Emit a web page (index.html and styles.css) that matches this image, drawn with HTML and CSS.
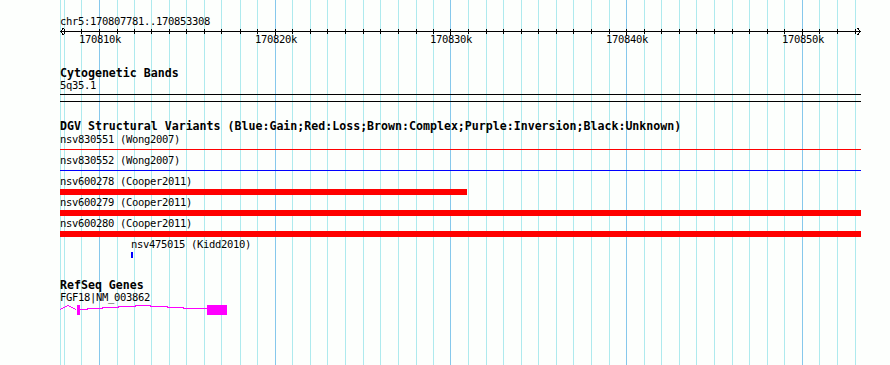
FILE: index.html
```html
<!DOCTYPE html>
<html lang="en">
<head>
  <meta charset="UTF-8">
  <title>chr5:170807781..170853308</title>
  <link rel="stylesheet" href="styles.css">
</head>
<body>
  <div class="panel">
    <svg class="canvas" width="890" height="365" viewBox="0 0 890 365">
      <!-- grid -->
      <path class="grid-minor" d="M60.5 0V365M64.5 0V365M81.5 0V365M117.5 0V365M134.5 0V365M151.5 0V365M169.5 0V365M186.5 0V365M204.5 0V365M221.5 0V365M240.5 0V365M257.5 0V365M292.5 0V365M310.5 0V365M327.5 0V365M345.5 0V365M363.5 0V365M380.5 0V365M398.5 0V365M416.5 0V365M433.5 0V365M468.5 0V365M486.5 0V365M503.5 0V365M521.5 0V365M538.5 0V365M556.5 0V365M573.5 0V365M591.5 0V365M609.5 0V365M644.5 0V365M661.5 0V365M679.5 0V365M696.5 0V365M714.5 0V365M732.5 0V365M749.5 0V365M767.5 0V365M784.5 0V365M819.5 0V365M837.5 0V365M855.5 0V365"/>
      <path class="grid-major" d="M99.5 0V365M275.5 0V365M450.5 0V365M626.5 0V365M802.5 0V365"/>

      <!-- ruler -->
      <text class="label" x="60" y="25">chr5:170807781..170853308</text>
      <g class="ruler">
        <path d="M60 31.5H861"/>
        <path d="M63.5 28L60.5 31.5L63.5 35M857.5 28L860.5 31.5L857.5 35"/>
        <path d="M64.5 29V34M81.5 29V34M117.5 29V34M134.5 29V34M151.5 29V34M169.5 29V34M186.5 29V34M204.5 29V34M221.5 29V34M240.5 29V34M257.5 29V34M292.5 29V34M310.5 29V34M327.5 29V34M345.5 29V34M363.5 29V34M380.5 29V34M398.5 29V34M416.5 29V34M433.5 29V34M468.5 29V34M486.5 29V34M503.5 29V34M521.5 29V34M538.5 29V34M556.5 29V34M573.5 29V34M591.5 29V34M609.5 29V34M644.5 29V34M661.5 29V34M679.5 29V34M696.5 29V34M714.5 29V34M732.5 29V34M749.5 29V34M767.5 29V34M784.5 29V34M819.5 29V34M837.5 29V34M855.5 29V34"/>
        <path d="M99.5 29V36M275.5 29V36M450.5 29V36M626.5 29V36M802.5 29V36"/>
      </g>
      <text class="label tick" x="100" y="43">170810k</text>
      <text class="label tick" x="276" y="43">170820k</text>
      <text class="label tick" x="451" y="43">170830k</text>
      <text class="label tick" x="627" y="43">170840k</text>
      <text class="label tick" x="803" y="43">170850k</text>

      <!-- cytogenetic bands -->
      <text class="title" x="60" y="77">Cytogenetic Bands</text>
      <text class="label" x="60" y="89">5q35.1</text>
      <path class="band" d="M60 94.5H861M60 101.5H861"/>

      <!-- DGV structural variants -->
      <text class="title" x="60" y="130">DGV Structural Variants (Blue:Gain;Red:Loss;Brown:Complex;Purple:Inversion;Black:Unknown)</text>
      <text class="label" x="60" y="143">nsv830551 (Wong2007)</text>
      <path class="loss-line" d="M60 149.5H861"/>
      <text class="label" x="60" y="164">nsv830552 (Wong2007)</text>
      <path class="gain-line" d="M60 170.5H861"/>
      <text class="label" x="60" y="185">nsv600278 (Cooper2011)</text>
      <rect class="loss" x="60" y="189" width="407" height="6"/>
      <text class="label" x="60" y="206">nsv600279 (Cooper2011)</text>
      <rect class="loss" x="60" y="210" width="801" height="6"/>
      <text class="label" x="60" y="227">nsv600280 (Cooper2011)</text>
      <rect class="loss" x="60" y="231" width="801" height="6"/>
      <text class="label" x="131" y="248">nsv475015 (Kidd2010)</text>
      <rect class="gain" x="131" y="252" width="2" height="6"/>

      <!-- refseq genes -->
      <text class="title" x="60" y="289">RefSeq Genes</text>
      <text class="label" x="60" y="301">FGF18|NM_003862</text>
      <g class="gene">
        <path class="intron" d="M60 309.5L68 305.5L76 309.5M80 309.5H87V308.5H102V307.5H118V306.5H135V305.5H150V306.5H167V307.5H183V308.5H207"/>
        <rect class="exon" x="77" y="305" width="3" height="10"/>
        <rect class="exon" x="207" y="305" width="20" height="10"/>
      </g>
    </svg>
  </div>
</body>
</html>
```

FILE: styles.css
```css
body {
  margin: 0;
  background: #fff;
}

.panel {
  width: 890px;
  height: 365px;
  background: #fdfffd;
}

.canvas {
  display: block;
}

.grid-minor {
  stroke: #aeeaee;
  stroke-width: 1;
  shape-rendering: crispEdges;
}

.grid-major {
  stroke: #86c8ec;
  stroke-width: 1;
  shape-rendering: crispEdges;
}

.ruler path {
  fill: none;
  stroke: #000;
  stroke-width: 1;
  shape-rendering: crispEdges;
}

.label {
  font-family: "DejaVu Sans Mono", monospace;
  font-size: 10.5px;
  letter-spacing: -0.32px;
  fill: #000;
}

.tick {
  text-anchor: middle;
}

.title {
  font-family: "DejaVu Sans Mono", monospace;
  font-weight: bold;
  font-size: 11.6px;
  fill: #000;
}

.band {
  stroke: #000;
  stroke-width: 1;
  shape-rendering: crispEdges;
}

.loss-line {
  stroke: #f00;
  stroke-width: 1;
  shape-rendering: crispEdges;
}

.gain-line {
  stroke: #00f;
  stroke-width: 1;
  shape-rendering: crispEdges;
}

.loss {
  fill: #f00;
  shape-rendering: crispEdges;
}

.gain {
  fill: #00f;
  shape-rendering: crispEdges;
}

.gene .intron {
  fill: none;
  stroke: #f0f;
  stroke-width: 1;
  shape-rendering: crispEdges;
}

.gene .exon {
  fill: #f0f;
  shape-rendering: crispEdges;
}
```
